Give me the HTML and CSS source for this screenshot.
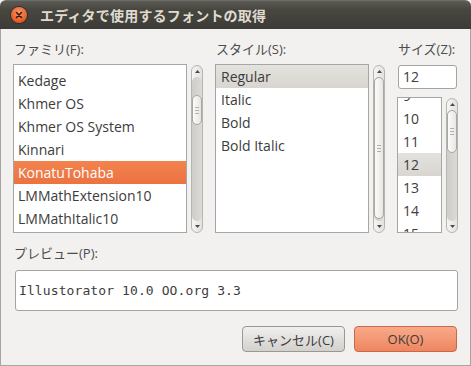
FILE: index.html
```html
<!DOCTYPE html>
<html lang="ja">
<head>
    <meta charset="UTF-8">
    <title>エディタで使用するフォントの取得</title>
    <link rel="stylesheet" href="styles.css">
</head>
<body>
    <div class="window">
        <div class="titlebar">
            <span class="close">
                <svg width="8" height="8" viewBox="0 0 8 8"><path d="M1.5 1.5 L6.5 6.5 M6.5 1.5 L1.5 6.5" stroke="#3a1a0c" stroke-width="1.6" stroke-linecap="round"/></svg>
            </span>
            <span class="title">エディタで使用するフォントの取得</span>
        </div>
        <div class="content">
            <div class="pickers">
                <div class="col">
                    <div class="label">ファミリ(F):</div>
                    <div class="list-row">
                        <div class="list family-list">
                            <ul class="offset-family">
                                <li>Kedage</li>
                                <li>Khmer OS</li>
                                <li>Khmer OS System</li>
                                <li>Kinnari</li>
                                <li class="selected">KonatuTohaba</li>
                                <li>LMMathExtension10</li>
                                <li>LMMathItalic10</li>
                            </ul>
                        </div>
                        <div class="scrollbar">
                            <div class="step"><svg width="5" height="3" viewBox="0 0 5 3"><path d="M0 3 L2.5 0 L5 3 Z" fill="#4a4a4a"/></svg></div>
                            <div class="trough"><div class="thumb" style="margin-top: 18px; height: 30px;"><span class="grip"></span></div></div>
                            <div class="step"><svg width="5" height="3" viewBox="0 0 5 3"><path d="M0 0 L2.5 3 L5 0 Z" fill="#4a4a4a"/></svg></div>
                        </div>
                    </div>
                </div>
                <div class="col">
                    <div class="label">スタイル(S):</div>
                    <div class="list-row">
                        <div class="list style-list">
                            <ul>
                                <li class="current">Regular</li>
                                <li>Italic</li>
                                <li>Bold</li>
                                <li>Bold Italic</li>
                            </ul>
                        </div>
                        <div class="scrollbar">
                            <div class="step"><svg width="5" height="3" viewBox="0 0 5 3"><path d="M0 3 L2.5 0 L5 3 Z" fill="#4a4a4a"/></svg></div>
                            <div class="trough"><div class="thumb" style="margin-top: 0; height: 142px;"><span class="grip"></span></div></div>
                            <div class="step"><svg width="5" height="3" viewBox="0 0 5 3"><path d="M0 0 L2.5 3 L5 0 Z" fill="#4a4a4a"/></svg></div>
                        </div>
                    </div>
                </div>
                <div class="col size-col">
                    <div class="label">サイズ(Z):</div>
                    <div class="entry">12</div>
                    <div class="list-row size-row">
                        <div class="list size-list">
                            <ul class="offset-size">
                                <li>9</li>
                                <li>10</li>
                                <li>11</li>
                                <li class="current">12</li>
                                <li>13</li>
                                <li>14</li>
                                <li>15</li>
                            </ul>
                        </div>
                        <div class="scrollbar">
                            <div class="step"><svg width="5" height="3" viewBox="0 0 5 3"><path d="M0 3 L2.5 0 L5 3 Z" fill="#4a4a4a"/></svg></div>
                            <div class="trough"><div class="thumb" style="margin-top: 0; height: 43px;"><span class="grip"></span></div></div>
                            <div class="step"><svg width="5" height="3" viewBox="0 0 5 3"><path d="M0 0 L2.5 3 L5 0 Z" fill="#4a4a4a"/></svg></div>
                        </div>
                    </div>
                </div>
            </div>

            <div class="label preview-label">プレビュー(P):</div>
            <div class="preview">Illustorator 10.0 OO.org 3.3</div>

            <div class="buttons">
                <button class="btn">キャンセル(C)</button>
                <button class="btn btn-ok">OK(O)</button>
            </div>
        </div>
    </div>
</body>
</html>
```

FILE: styles.css
```css
body {
    margin: 0;
    padding: 0;
    background-color: #f2f1f0;
    font-family: "Open Sans", "Noto Sans CJK JP", sans-serif;
    color: #3c3c3c;
}

.window {
    width: 471px;
    height: 366px;
    display: flex;
    flex-direction: column;
    overflow: hidden;
}

.titlebar {
    height: 29px;
    flex: none;
    display: flex;
    align-items: center;
    background: linear-gradient(#5b5a55, #48473f 30%, #3c3b37);
    border-top: 1px solid #6e6d68;
    border-radius: 6px 6px 0 0;
    box-sizing: border-box;
}

.titlebar .close {
    width: 16px;
    height: 16px;
    margin-left: 11px;
    border-radius: 50%;
    background: radial-gradient(circle at 50% 35%, #f79a6e, #e9612c 60%, #c94614);
    box-shadow: 0 0 0 1px #2e2d2a;
    display: flex;
    align-items: center;
    justify-content: center;
}

.titlebar .title {
    margin-left: 13px;
    color: #dfdbd2;
    font-family: "Noto Sans CJK JP", sans-serif;
    font-weight: bold;
    font-size: 14px;
    letter-spacing: 0.2px;
}

.content {
    flex: 1;
    background-color: #f2f1f0;
    border: 1px solid #a7a5a0;
    border-top: none;
    padding: 12px 13px 0 12px;
}

.label {
    font-size: 13px;
    line-height: 16px;
    color: #4c4c4c;
    padding-left: 1px;
    font-family: "Open Sans", "Noto Sans CJK JP", sans-serif;
}

.pickers {
    display: flex;
    gap: 12px;
}

.col {
    display: flex;
    flex-direction: column;
}

.col .label {
    margin-bottom: 7px;
}

.list-row {
    display: flex;
    gap: 4px;
    height: 169px;
}

.list {
    background-color: white;
    border: 1px solid #a6a6a6;
    box-sizing: border-box;
    overflow: hidden;
}

.family-list {
    width: 174px;
}

.style-list {
    width: 154px;
}

.size-list {
    width: 45px;
}

.list ul {
    list-style: none;
    margin: 0;
    padding: 0;
}

.list li {
    height: 23px;
    line-height: 23px;
    font-size: 14px;
    padding-left: 4px;
    white-space: nowrap;
}

.style-list li,
.size-list li {
    padding-left: 5px;
}

.offset-family {
    padding-top: 4px !important;
}

.offset-size {
    margin-top: -14px !important;
}

.list li.selected {
    background: linear-gradient(#f2834f, #ec7241);
    color: white;
}

.list li.current {
    background: linear-gradient(#e4e2de, #d9d6d1);
}

.scrollbar {
    width: 12px;
    margin-top: 1px;
    display: flex;
    flex-direction: column;
    border: 1px solid #b7b5b0;
    border-radius: 6px;
    background: linear-gradient(90deg, #f6f5f4, #e3e1de);
    box-sizing: border-box;
}

.step {
    height: 11px;
    flex: none;
    display: flex;
    align-items: center;
    justify-content: center;
}

.trough {
    flex: 1;
    background: linear-gradient(90deg, #cfcdc9, #dcdad6);
    border-radius: 5px;
    display: flex;
    flex-direction: column;
}

.thumb {
    flex: none;
    box-sizing: border-box;
    border: 1px solid #a9a7a2;
    border-radius: 5px;
    background: linear-gradient(90deg, #fbfbfa, #e8e6e3);
    display: flex;
    align-items: center;
    justify-content: center;
}

.grip {
    width: 4px;
    height: 5px;
    border-top: 1px solid #b3b1ad;
    border-bottom: 1px solid #b3b1ad;
    position: relative;
}

.grip::after {
    content: "";
    position: absolute;
    left: 0;
    right: 0;
    top: 2px;
    border-top: 1px solid #b3b1ad;
}

.size-col .entry {
    width: 59px;
    height: 24px;
    margin: 1px 0 8px 1px;
    box-sizing: border-box;
    background-color: white;
    border: 1px solid #a4a4a4;
    border-radius: 3px;
    font-size: 14px;
    line-height: 22px;
    padding-left: 4px;
}

.size-row {
    height: 136px;
}

.preview-label {
    margin-top: 12px;
}

.preview {
    margin: 9px 0 0 2px;
    width: 443px;
    height: 41px;
    box-sizing: border-box;
    background-color: white;
    border: 1px solid #a4a4a4;
    border-radius: 3px;
    padding-left: 3px;
    font-family: "DejaVu Sans Mono", monospace;
    font-size: 13px;
    letter-spacing: 0.1px;
    line-height: 39px;
    color: #3c3c3c;
}

.buttons {
    display: flex;
    justify-content: flex-end;
    gap: 9px;
    margin-top: 15px;
}

.btn {
    width: 103px;
    height: 26px;
    border: 1px solid #9a9893;
    border-radius: 4px;
    background: linear-gradient(#f0efed, #d3d1cd);
    font-family: "Open Sans", "Noto Sans CJK JP", sans-serif;
    font-size: 13px;
    color: #3c3c3c;
    padding: 0;
}

.btn-ok {
    border-color: #c86a45;
    background: linear-gradient(#f8aa8a, #ef8660);
}
```
